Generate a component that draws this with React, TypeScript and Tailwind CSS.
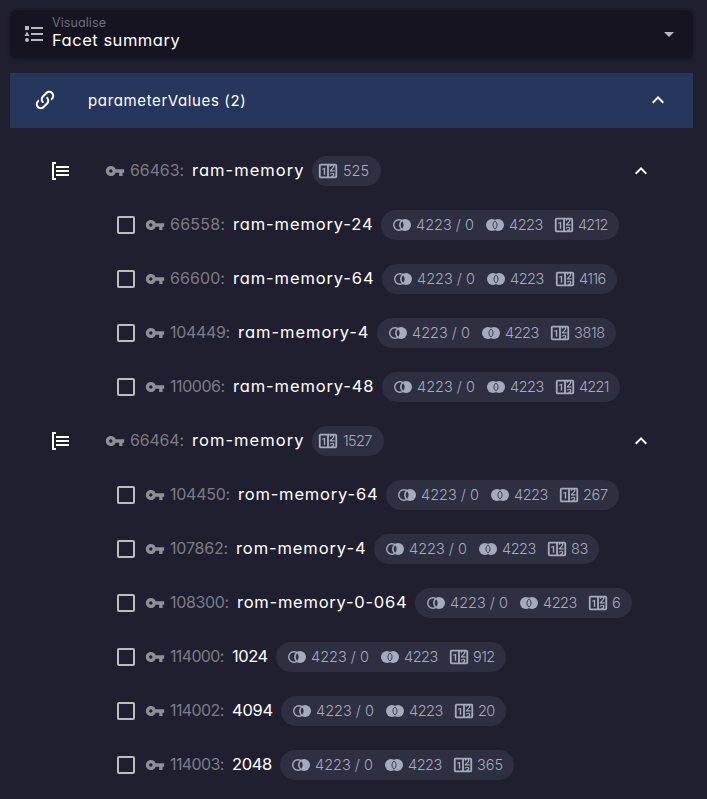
import { useLayoutEffect, useRef, useState } from "react";

const icons = {
  listType:
    "M5,9.5L7.5,14H2.5L5,9.5M3,4H7V8H3V4M5,20A2,2 0 0,0 7,18A2,2 0 0,0 5,16A2,2 0 0,0 3,18A2,2 0 0,0 5,20M9,5V7H21V5H9M9,19H21V17H9V19M9,13H21V11H9V13Z",
  link: "M10.59,13.41C11,13.8 11,14.44 10.59,14.83C10.2,15.22 9.56,15.22 9.17,14.83C7.22,12.88 7.22,9.71 9.17,7.76V7.76L12.71,4.22C14.66,2.27 17.83,2.27 19.78,4.22C21.73,6.17 21.73,9.34 19.78,11.29L18.29,12.78C18.3,11.96 18.17,11.14 17.89,10.36L18.36,9.88C19.54,8.71 19.54,6.81 18.36,5.64C17.19,4.46 15.29,4.46 14.12,5.64L10.59,9.17C9.41,10.34 9.41,12.24 10.59,13.41M13.41,9.17C13.8,8.78 14.44,8.78 14.83,9.17C16.78,11.12 16.78,14.29 14.83,16.24V16.24L11.29,19.78C9.34,21.73 6.17,21.73 4.22,19.78C2.27,17.83 2.27,14.66 4.22,12.71L5.71,11.22C5.7,12.04 5.83,12.86 6.11,13.65L5.64,14.12C4.46,15.29 4.46,17.19 5.64,18.36C6.81,19.54 8.71,19.54 9.88,18.36L13.41,14.83C14.59,13.66 14.59,11.76 13.41,10.58C13,10.2 13,9.56 13.41,9.17Z",
  chevronUp: "M7.41,15.41L12,10.83L16.59,15.41L18,14L12,8L6,14L7.41,15.41Z",
  menuDown: "M7,10L12,15L17,10H7Z",
  listGroup:
    "M5 5V19H7V21H3V3H7V5H5M20 7H7V9H20V7M20 15H7V17H20V15M20 11H7V13H20V11Z",
  key: "M12.65 10A5.99 5.99 0 0 0 7 6c-3.31 0-6 2.69-6 6s2.69 6 6 6a5.99 5.99 0 0 0 5.65-4H17v4h4v-4h2v-4H12.65zM7 14c-1.1 0-2-.9-2-2s.9-2 2-2 2 .9 2 2-.9 2-2 2z",
  counter:
    "M4,4H20A2,2 0 0,1 22,6V18A2,2 0 0,1 20,20H4A2,2 0 0,1 2,18V6A2,2 0 0,1 4,4M4,6V18H11V6H4M20,18V6H18.76C19,6.54 18.95,7.07 18.95,7.13C18.88,7.8 18.41,8.5 18.24,8.75L15.91,11.3L19.23,11.28L19.24,12.5L14.04,12.47L14,11.47C14,11.47 17.05,8.24 17.2,7.95C17.34,7.67 17.91,6 16.5,6C15.27,6.05 15.41,7.3 15.41,7.3L13.87,7.31C13.87,7.31 13.88,6.65 14.25,6H13V18H15.58L15.57,17.14L16.54,17.13C16.54,17.13 17.45,16.97 17.46,16.08C17.5,15.08 16.65,15.08 16.5,15.08C16.37,15.08 15.43,15.13 15.43,15.95H13.91C13.91,15.95 13.95,13.89 16.5,13.89C19.1,13.89 18.96,15.91 18.96,15.91C18.96,15.91 19,17.16 17.85,17.63L18.37,18H20M8.92,16H7.42V10.2L5.62,10.76V9.53L8.76,8.41H8.92V16Z",
};

function Icon({ name, className }: { name: keyof typeof icons; className: string }) {
  return (
    <svg viewBox="0 0 24 24" fill="currentColor" className={`shrink-0 ${className}`}>
      <path d={icons[name]} />
    </svg>
  );
}

// Two overlapping sets; only the right one is filled when `both` is off.
function SetIcon({ both = false }: { both?: boolean }) {
  return (
    <svg viewBox="0 0 18 12" className="mb-px h-3 w-[18px] shrink-0">
      {both ? (
        <>
          <circle cx="6" cy="6" r="6" fill="#a5abbd" />
          <circle cx="12" cy="6" r="6" fill="#a5abbd" />
          <path
            d="M9 1.9C6.3 4.1 6.3 7.9 9 10.1C11.7 7.9 11.7 4.1 9 1.9Z"
            fill="none"
            stroke="#2f2f42"
            strokeWidth="0.9"
          />
        </>
      ) : (
        <>
          <circle cx="12" cy="6" r="6" fill="#a5abbd" />
          <circle cx="6" cy="6" r="5.3" fill="none" stroke="#a5abbd" strokeWidth="1.4" />
          <path d="M9.2 2.2C7.1 4.2 7.1 7.8 9.2 9.8C11.1 7.8 11.1 4.2 9.2 2.2Z" fill="#2f2f42" />
        </>
      )}
    </svg>
  );
}

// Tracks a line of text so that it spans the given width.
function Fit({ text, width, className = "" }: { text: string; width: number; className?: string }) {
  const ref = useRef<HTMLSpanElement>(null);
  const [spacing, setSpacing] = useState(0);
  useLayoutEffect(() => {
    if (ref.current) {
      const natural = ref.current.getBoundingClientRect().width;
      setSpacing((width - natural) / (text.length - 0.5));
    }
  }, [text, width]);
  return (
    <span className={`block shrink-0 whitespace-pre ${className}`} style={{ width }}>
      <span ref={ref} style={{ letterSpacing: spacing }}>
        {text}
      </span>
    </span>
  );
}

type Row = {
  id: string;
  idWidth: number;
  name: string;
  nameWidth: number;
  count: string;
  countWidth: number;
};

const ram: Row[] = [
  { id: "66558:", idWidth: 55, name: "ram-memory-24", nameWidth: 140, count: "4212", countWidth: 30 },
  { id: "66600:", idWidth: 55, name: "ram-memory-64", nameWidth: 141, count: "4116", countWidth: 27 },
  { id: "104449:", idWidth: 60, name: "ram-memory-4", nameWidth: 131, count: "3818", countWidth: 31 },
  { id: "110006:", idWidth: 55, name: "ram-memory-48", nameWidth: 141, count: "4221", countWidth: 30 },
];

const rom: Row[] = [
  { id: "104450:", idWidth: 60, name: "rom-memory-64", nameWidth: 140, count: "267", countWidth: 25 },
  { id: "107862:", idWidth: 58, name: "rom-memory-4", nameWidth: 130, count: "83", countWidth: 17 },
  { id: "108300:", idWidth: 59, name: "rom-memory-0-064", nameWidth: 170, count: "6", countWidth: 9 },
  { id: "114000:", idWidth: 54, name: "1024", nameWidth: 36, count: "912", countWidth: 22 },
  { id: "114002:", idWidth: 54, name: "4094", nameWidth: 41, count: "20", countWidth: 17 },
  { id: "114003:", idWidth: 54, name: "2048", nameWidth: 40, count: "365", countWidth: 26 },
];

function Identity({ row }: { row: Row }) {
  return (
    <>
      <Icon name="key" className="-ml-px h-5 w-5 text-[#8f8f98]" />
      <Fit text={row.id} width={row.idWidth} className="ml-[5px] pb-0.5 text-base font-normal text-[#7c7c87]" />
      <Fit text={row.name} width={row.nameWidth} className="ml-2 pb-0.5 text-[16.5px] leading-6 text-white" />
    </>
  );
}

function Group({ row }: { row: Row }) {
  return (
    <div className="flex h-[54px] items-center pr-[54px] pl-[49px]">
      <Icon name="listGroup" className="h-6 w-6 text-white" />
      <div className="ml-[33px] flex items-center">
        <Identity row={row} />
        <div className="ml-2 flex h-[30px] items-center rounded-full bg-[#2f2f42] pr-3 pl-[5px] text-[#a5abbd]">
          <Icon name="counter" className="mb-px h-[22px] w-[22px]" />
          <Fit text={row.count} width={row.countWidth} className="ml-1 text-[14.5px] leading-5 font-light" />
        </div>
      </div>
      <Icon name="chevronUp" className="ml-auto h-6 w-6 text-white" />
    </div>
  );
}

function Item({ row }: { row: Row }) {
  return (
    <div className="flex h-[54px] items-center pl-[117px]">
      <span className="mr-[11px] h-[18px] w-[18px] shrink-0 rounded-[2px] border-2 border-[#bcbcc1]" />
      <Identity row={row} />
      <div className="ml-2 flex h-[30px] shrink-0 items-center rounded-full bg-[#2f2f42] pr-[11px] pl-3 text-[14.5px] leading-5 font-light text-[#a5abbd]">
        <SetIcon />
        <Fit text="4223 / 0" width={58} className="ml-[5px]" />
        <span className="ml-3 flex">
          <SetIcon both />
        </span>
        <Fit text="4223" width={34} className="ml-[5px]" />
        <Icon name="counter" className="mb-px ml-[10px] h-[22px] w-[22px]" />
        <Fit text={row.count} width={row.countWidth} className="ml-[3px]" />
      </div>
    </div>
  );
}

export default function App() {
  return (
    <main className="h-[799px] w-[707px] overflow-hidden bg-[#1f1f30] pt-2.5 font-['Inter',sans-serif] [font-feature-settings:'cv11']">
      <header className="mx-2.5 mr-3.5 flex h-12 items-center rounded-md bg-[#151420] pr-3 pl-3 shadow-[0_1px_3px_#151420]">
        <Icon name="listType" className="h-6 w-6 text-[#b9b9bd]" />
        <div className="ml-[6px] pb-0.5">
          <Fit text="Visualise" width={54} className="text-[12.5px] leading-[15px] font-normal text-[#6c6c79]" />
          <Fit text="Facet summary" width={128} className="text-[16.5px] leading-[21px] text-white" />
        </div>
        <Icon name="menuDown" className="ml-auto h-6 w-6 text-[#b9b9bd]" />
      </header>
      <section className="mt-[15px]">
        <div className="mr-3.5 ml-2.5 flex h-[55px] items-center bg-[#27365c] pr-[23px] pl-[23px] text-white">
          <Icon name="link" className="mb-px h-6 w-6" />
          <Fit text="parameterValues (2)" width={158} className="ml-[31px] pt-px text-[15px] leading-6" />
          <Icon name="chevronUp" className="mb-0.5 ml-auto h-6 w-6" />
        </div>
        <div className="pt-4">
          <Group row={{ id: "66463:", idWidth: 54, name: "ram-memory", nameWidth: 112, count: "525", countWidth: 26 }} />
          {ram.map((row) => (
            <Item key={row.id} row={row} />
          ))}
          <Group row={{ id: "66464:", idWidth: 54, name: "rom-memory", nameWidth: 112, count: "1527", countWidth: 29 }} />
          {rom.map((row) => (
            <Item key={row.id} row={row} />
          ))}
        </div>
      </section>
    </main>
  );
}
